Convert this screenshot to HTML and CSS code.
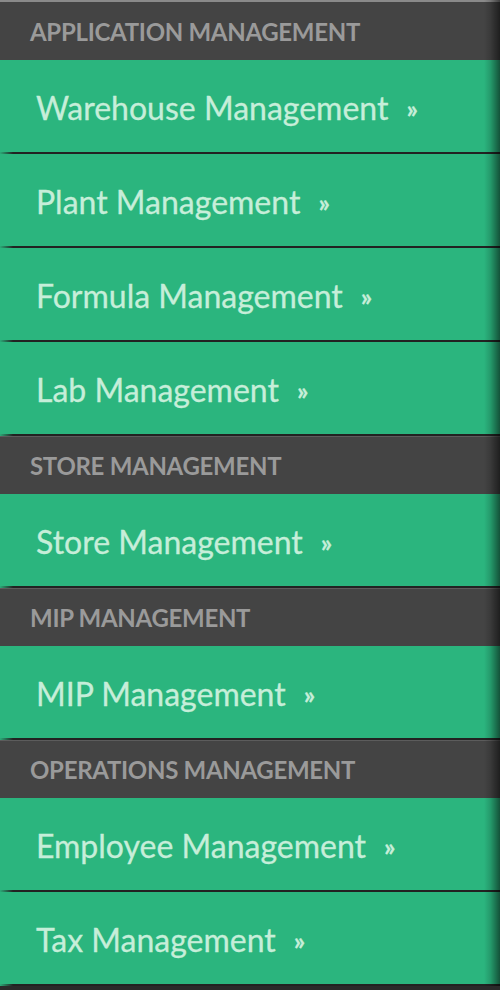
FILE: index.html
```html
<!DOCTYPE html>
<html>
<head>
<meta charset="utf-8">
<link rel="stylesheet" href="styles.css">
</head>
<body>
<nav class="menu">
  <div class="group first">Application Management</div>
  <a class="item" href="#">Warehouse Management <span class="raquo">»</span></a>
  <a class="item" href="#">Plant Management <span class="raquo">»</span></a>
  <a class="item" href="#">Formula Management <span class="raquo">»</span></a>
  <a class="item" href="#">Lab Management <span class="raquo">»</span></a>
  <div class="group">Store Management</div>
  <a class="item" href="#">Store Management <span class="raquo">»</span></a>
  <div class="group">MIP Management</div>
  <a class="item" href="#">MIP Management <span class="raquo">»</span></a>
  <div class="group">Operations Management</div>
  <a class="item" href="#">Employee Management <span class="raquo">»</span></a>
  <a class="item" href="#">Tax Management <span class="raquo">»</span></a>
</nav>
</body>
</html>
```
FILE: styles.css
```css
html, body {
  margin: 0;
  padding: 0;
  background: #2a2a2a;
}
body {
  width: 500px;
  height: 990px;
  overflow: hidden;
  font-family: Lato, "Open Sans", sans-serif;
}
.menu {
  position: relative;
  display: flex;
  flex-direction: column;
  width: 500px;
}
.menu::after {
  content: "";
  position: absolute;
  top: 0;
  right: 0;
  bottom: 0;
  width: 16px;
  background: linear-gradient(to right, rgba(0,0,0,0) 0, rgba(0,0,0,0.15) 40%, rgba(0,0,0,0.55) 100%);
  pointer-events: none;
}
.group {
  box-sizing: border-box;
  height: 58px;
  background: #444444;
  border-top: 1px solid #5c5c5c;
  color: #9a9a9a;
  font-weight: 700;
  font-size: 24px;
  text-transform: uppercase;
  padding-left: 30px;
  display: flex;
  align-items: center;
  letter-spacing: -0.3px;
}
.group.first {
  height: 60px;
  border-top: 2px solid #8a8a8a;
}
.item {
  box-sizing: border-box;
  height: 94px;
  background: #2bb57e;
  color: #c6eed9;
  text-decoration: none;
  font-size: 32px;
  padding-left: 36px;
  padding-top: 3px;
  display: flex;
  align-items: center;
  border-bottom: 2px solid #222;
  border-image: linear-gradient(to right, #2bb57e 0, #222 14px) 1;
  -webkit-text-stroke: 0.3px #c6eed9;
}
.raquo {
  margin-left: 18px;
  font-weight: 700;
  font-size: 25px;
}
```
